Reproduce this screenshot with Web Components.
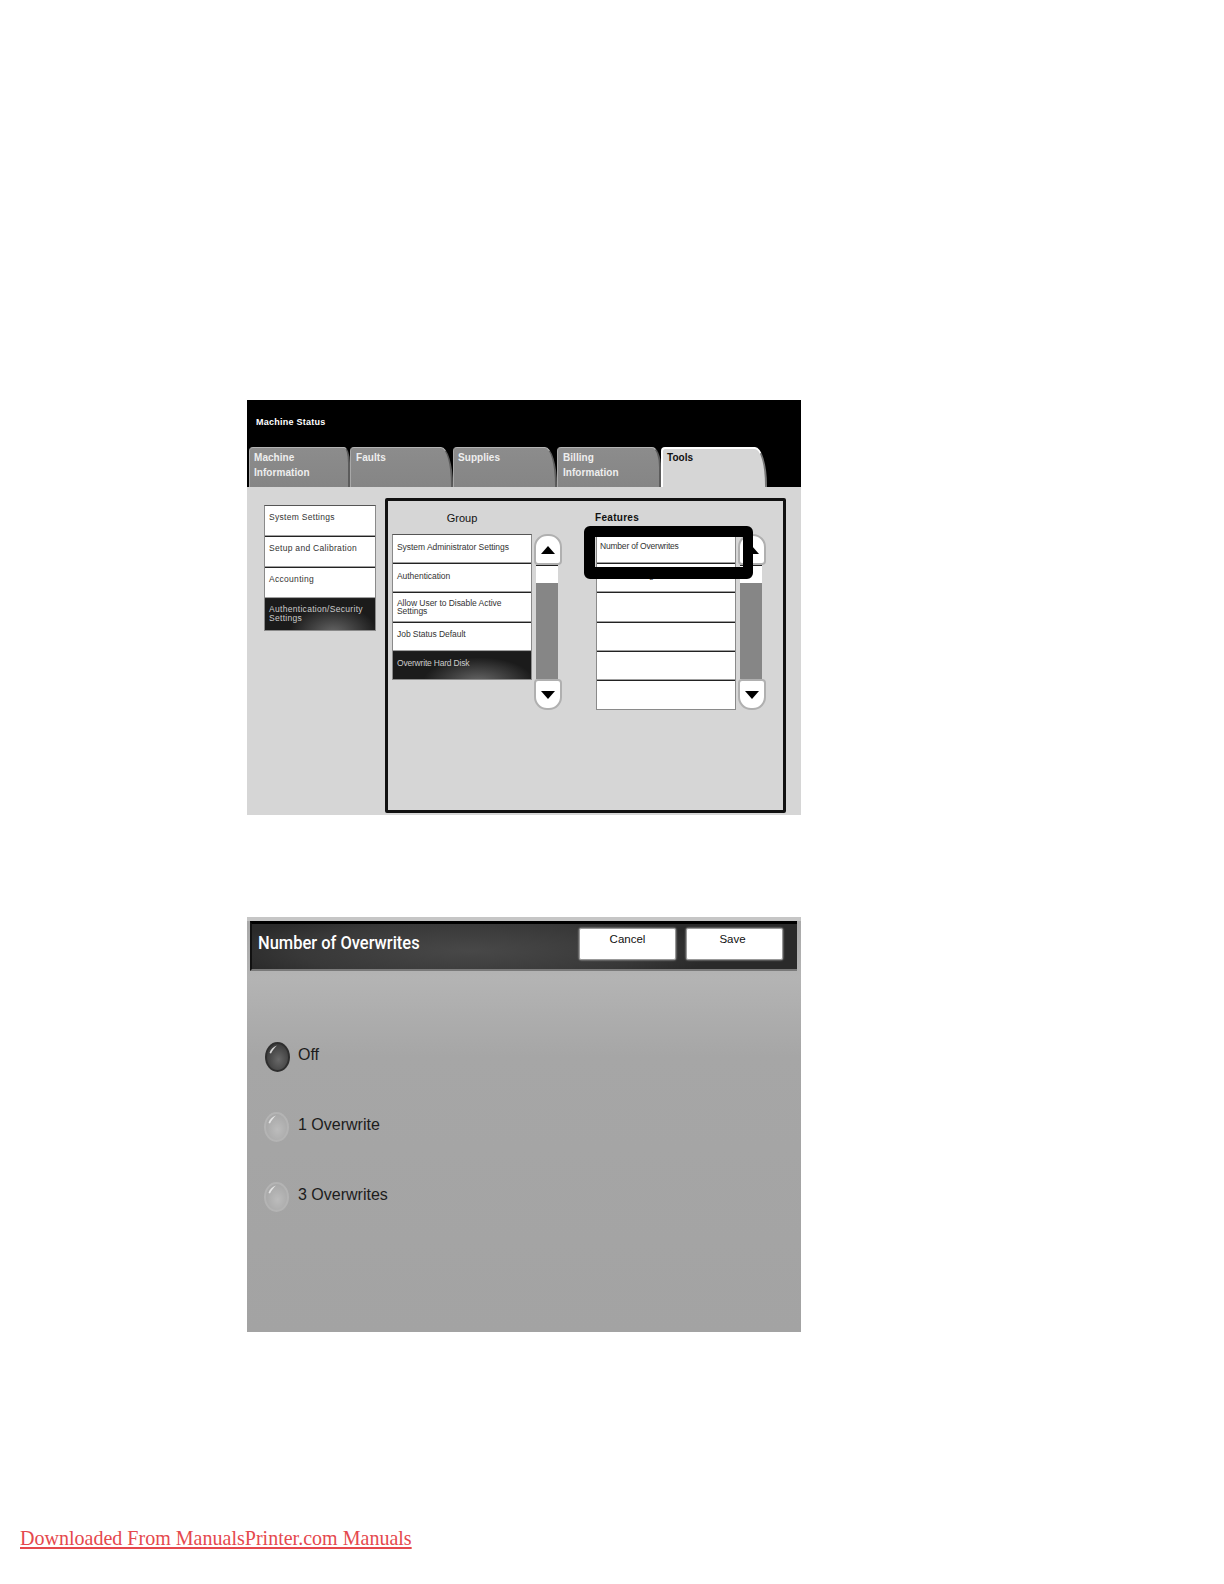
<!DOCTYPE html>
<html>
<head>
<meta charset="utf-8">
<title>Number of Overwrites</title>
<style>
  html, body { margin: 0; background: #fff; }
</style>
</head>
<body>
<x-manual-page>
  <x-status-panel>
    <x-tab slot="tabs" w="101" r="6 16" style="padding-left:4px">Machine<br>Information</x-tab>
    <x-tab slot="tabs" w="103">Faults</x-tab>
    <x-tab slot="tabs" w="104" style="padding-left:4px">Supplies</x-tab>
    <x-tab slot="tabs" w="104" r="9 20">Billing<br>Information</x-tab>
    <x-tab slot="tabs" w="106" active style="padding-left:4px">Tools</x-tab>

    <x-list slot="nav" rowh="31" pad="7" ls=".3">
      <x-row>System Settings</x-row>
      <x-row>Setup and Calibration</x-row>
      <x-row>Accounting</x-row>
      <x-row selected style="padding-top:6px">Authentication/Security<br>Settings</x-row>
    </x-list>

    <x-list slot="group" rowh="29.2" pad="7.5" ls="-.05">
      <x-row>System Administrator Settings</x-row>
      <x-row>Authentication</x-row>
      <x-row style="padding-top:5.5px">Allow User to Disable Active<br>Settings</x-row>
      <x-row>Job Status Default</x-row>
      <x-row selected style="height:27px;letter-spacing:-.2px">Overwrite Hard Disk</x-row>
    </x-list>

    <x-list slot="features" rowh="29.2" pad="7" ls="-.2">
      <x-row indent="3">Number of Overwrites</x-row>
      <x-row indent="52">g</x-row>
      <x-row></x-row>
      <x-row></x-row>
      <x-row></x-row>
      <x-row style="height:28.2px"></x-row>
    </x-list>
  </x-status-panel>

  <x-overwrites-panel>
    <x-radio checked>Off</x-radio>
    <x-radio>1 Overwrite</x-radio>
    <x-radio>3 Overwrites</x-radio>
  </x-overwrites-panel>

  <x-footer-link>Downloaded From ManualsPrinter.com Manuals</x-footer-link>
</x-manual-page>

<script>
const pageTemplate = document.createElement('template');
pageTemplate.innerHTML = `
<style>
  :host {
    display: flex;
    flex-direction: column;
    box-sizing: border-box;
    height: 1584px;
    padding: 400px 0 0 247px;
    font-family: "Liberation Sans", Arial, sans-serif;
  }
  .panels {
    display: flex;
    flex-direction: column;
    gap: 102px;
  }
  .foot {
    margin: 194px 0 0 -227px;
  }
</style>
<div class="panels"><slot></slot></div>
<div class="foot"><slot name="foot"></slot></div>
`;

class XManualPage extends HTMLElement {
    constructor() {
        super();
        this.attachShadow({mode: 'open'});
        this.shadowRoot.appendChild(pageTemplate.content.cloneNode(true));
    }
    connectedCallback() {
        const link = this.querySelector('x-footer-link');
        if (link) link.slot = 'foot';
    }
}

const statusTemplate = document.createElement('template');
statusTemplate.innerHTML = `
<style>
  :host {
    display: block;
    width: 554px;
    height: 415px;
    font-family: "Liberation Sans", Arial, sans-serif;
  }
  .head {
    display: flex;
    flex-direction: column;
    justify-content: space-between;
    box-sizing: border-box;
    height: 87px;
    background: #000;
    padding-top: 16px;
  }
  .machine-status {
    margin-left: 9px;
    color: #fff;
    font-size: 9px;
    line-height: 12px;
    font-weight: bold;
    letter-spacing: .25px;
  }
  .tabs {
    display: flex;
    margin-left: 2px;
  }
  .body {
    display: flex;
    align-items: flex-start;
    box-sizing: border-box;
    height: 328px;
    background: #d6d6d6;
    padding: 11px 0 0 17px;
  }
  .nav {
    width: 112px;
    margin: 7px 9px 0 0;
  }
  .frame {
    position: relative;
    display: grid;
    grid-template-columns: 140px 30px 34px 140px 30px;
    grid-template-rows: 33px 176px;
    box-sizing: border-box;
    width: 401px;
    height: 315px;
    border: 3px solid #111;
    border-radius: 2px;
    padding-left: 4px;
  }
  h3 {
    margin: 0;
    font-size: 11px;
    color: #111;
    line-height: 14px;
  }
  .group-title {
    grid-column: 1;
    text-align: center;
    font-weight: normal;
    padding-top: 10px;
  }
  .feat-title {
    grid-column: 4;
    margin-left: -1px;
    padding-top: 10px;
    font-size: 10px;
    letter-spacing: .3px;
  }
  x-scrollbar.left { grid-column: 2; grid-row: 2; margin-left: 2px; }
  x-scrollbar.right { grid-column: 5; grid-row: 2; margin-left: 2px; }
  .group-list { grid-column: 1; grid-row: 2; }
  .feat-list { grid-column: 4; grid-row: 2; }
  /* black callout drawn over the first feature row */
  .callout {
    position: absolute;
    left: 196px;
    top: 25px;
    width: 169px;
    height: 53px;
    box-sizing: border-box;
    border: 11px solid #000;
    border-right-width: 10px;
    border-bottom-width: 12px;
    border-radius: 6px;
  }
</style>
<div class="head">
  <div class="machine-status">Machine Status</div>
  <div class="tabs"><slot name="tabs"></slot></div>
</div>
<div class="body">
  <div class="nav"><slot name="nav"></slot></div>
  <div class="frame">
    <h3 class="group-title">Group</h3>
    <div></div><div></div>
    <h3 class="feat-title">Features</h3>
    <div></div>
    <div class="group-list"><slot name="group"></slot></div>
    <x-scrollbar class="left"></x-scrollbar>
    <div class="feat-list"><slot name="features"></slot></div>
    <x-scrollbar class="right"></x-scrollbar>
    <div class="callout"></div>
  </div>
</div>
`;

class XStatusPanel extends HTMLElement {
    constructor() {
        super();
        this.attachShadow({mode: 'open'});
        this.shadowRoot.appendChild(statusTemplate.content.cloneNode(true));
    }
}

const tabTemplate = document.createElement('template');
tabTemplate.innerHTML = `
<style>
  :host {
    display: block;
    box-sizing: border-box;
    height: 40px;
    padding: 3px 0 0 5px;
    background: linear-gradient(#8c8c8c, #858585);
    border-top: 1px solid #b4b4b4;
    border-left: 1px solid #a8a8a8;
    border-right: 2px solid #5c5c5c;
    border-radius: 4px var(--rx, 12px) 0 0 / 4px var(--ry, 38px) 0 0;
    color: #eee;
    font-size: 10px;
    font-weight: bold;
    line-height: 14.5px;
    letter-spacing: .05px;
  }
  :host([active]) {
    background: #d6d6d6;
    color: #111;
    border-top: 2px solid #fff;
    border-left: 2px solid #fff;
    border-right: 2px solid #777;
    padding-top: 2px;
  }
</style>
<slot></slot>
`;

class XTab extends HTMLElement {
    constructor() {
        super();
        this.attachShadow({mode: 'open'});
        this.shadowRoot.appendChild(tabTemplate.content.cloneNode(true));
    }
    connectedCallback() {
        this.style.width = this.getAttribute('w') + 'px';
        const r = this.getAttribute('r');
        if (r) {
            const [rx, ry] = r.split(' ');
            this.style.setProperty('--rx', rx + 'px');
            this.style.setProperty('--ry', ry + 'px');
        }
    }
}

const listTemplate = document.createElement('template');
listTemplate.innerHTML = `
<style>
  :host {
    display: flex;
    flex-direction: column;
    box-sizing: border-box;
    border: 1px solid #8a8a8a;
    border-top-color: #555;
    background: #fff;
  }
</style>
<slot></slot>
`;

class XList extends HTMLElement {
    constructor() {
        super();
        this.attachShadow({mode: 'open'});
        this.shadowRoot.appendChild(listTemplate.content.cloneNode(true));
    }
    connectedCallback() {
        this.style.setProperty('--row-h', this.getAttribute('rowh') + 'px');
        this.style.setProperty('--row-pad', this.getAttribute('pad') + 'px');
        this.style.setProperty('--row-ls', this.getAttribute('ls') + 'px');
    }
}

const rowTemplate = document.createElement('template');
rowTemplate.innerHTML = `
<style>
  :host {
    display: block;
    box-sizing: border-box;
    height: var(--row-h, 29px);
    padding: var(--row-pad, 6px) 0 0 4px;
    background: #fff;
    border-bottom: 1px solid #222;
    box-shadow: inset 0 -1px #a0a0a0;
    color: #333;
    font-size: 8.5px;
    line-height: 8.5px;
    letter-spacing: var(--row-ls, 0);
    white-space: nowrap;
    overflow: hidden;
  }
  :host(:last-child) {
    border-bottom: 0;
    box-shadow: none;
  }
  :host([selected]) {
    background: radial-gradient(ellipse 40% 90% at 62% 110%, #666, #1b1b1b);
    color: #ccc;
  }
</style>
<slot></slot>
`;

class XRow extends HTMLElement {
    constructor() {
        super();
        this.attachShadow({mode: 'open'});
        this.shadowRoot.appendChild(rowTemplate.content.cloneNode(true));
    }
    connectedCallback() {
        const indent = this.getAttribute('indent');
        if (indent) this.style.paddingLeft = indent + 'px';
    }
}

const scrollTemplate = document.createElement('template');
scrollTemplate.innerHTML = `
<style>
  :host {
    display: flex;
    flex-direction: column;
    align-items: flex-start;
    width: 28px;
    height: 176px;
  }
  .btn {
    display: flex;
    align-items: center;
    justify-content: center;
    box-sizing: border-box;
    flex: none;
    width: 28px;
    height: 31px;
    background: #fff;
    border: 2px solid #b0b0b0;
  }
  .up { border-radius: 13px 13px 4px 4px; }
  .down { border-radius: 4px 4px 13px 13px; }
  .track {
    flex: 1;
    display: flex;
    flex-direction: column;
    box-sizing: border-box;
    width: 22px;
    margin-left: 2px;
    border-top: 1px solid #222;
    background: #868686;
  }
  .thumb {
    height: 17px;
    background: #fff;
  }
</style>
<div class="btn up"><svg width="14" height="8" viewBox="0 0 14 8"><path d="M7 0 14 8H0Z" fill="#000"/></svg></div>
<div class="track"><div class="thumb"></div></div>
<div class="btn down"><svg width="14" height="8" viewBox="0 0 14 8"><path d="M0 0H14L7 8Z" fill="#000"/></svg></div>
`;

class XScrollbar extends HTMLElement {
    constructor() {
        super();
        this.attachShadow({mode: 'open'});
        this.shadowRoot.appendChild(scrollTemplate.content.cloneNode(true));
    }
}

const overwritesTemplate = document.createElement('template');
overwritesTemplate.innerHTML = `
<style>
  :host {
    display: block;
    box-sizing: border-box;
    width: 554px;
    height: 415px;
    padding-top: 4px;
    background: linear-gradient(#c6c6c6 0 4px, #a9a9a9 4px, #b4b4b4 60px, #a6a6a6 140px, #a3a3a3);
    font-family: "Liberation Sans", Arial, sans-serif;
  }
  .bar {
    display: flex;
    align-items: center;
    justify-content: space-between;
    box-sizing: border-box;
    height: 50px;
    margin: 0 4px 0 3px;
    padding: 3px 14px 6px 6px;
    background: radial-gradient(ellipse 45% 90% at 40% 60%, #484848, #383838 70%, #2a2a2a);
    border-top: 3px solid #000;
    border-left: 2px solid #111;
    border-bottom: 2px solid #7a7a7a;
  }
  .title {
    color: #fff;
    font-family: Roboto, "Liberation Sans", sans-serif;
    font-size: 18.5px;
    font-weight: 500;
    margin-top: -4px;
    transform: scaleX(.89);
    transform-origin: left center;
  }
  .actions {
    display: flex;
    gap: 10px;
    margin-top: -2px;
  }
  .btn {
    box-sizing: border-box;
    width: 97px;
    height: 32px;
    background: #fff;
    border: 1px solid #999;
    border-radius: 2px;
    box-shadow: 0 0 2px #ccc;
    padding-top: 3px;
    text-align: center;
    color: #111;
    font-size: 11.5px;
    line-height: 14px;
  }
  .save {
    padding-right: 4px;
  }
  .options {
    display: flex;
    flex-direction: column;
    gap: 40px;
    padding: 71px 0 0 17px;
  }
</style>
<div class="bar">
  <div class="title">Number of Overwrites</div>
  <div class="actions">
    <div class="btn">Cancel</div>
    <div class="btn save">Save</div>
  </div>
</div>
<div class="options"><slot></slot></div>
`;

class XOverwritesPanel extends HTMLElement {
    constructor() {
        super();
        this.attachShadow({mode: 'open'});
        this.shadowRoot.appendChild(overwritesTemplate.content.cloneNode(true));
    }
}

const radioTemplate = document.createElement('template');
radioTemplate.innerHTML = `
<style>
  :host {
    display: flex;
    align-items: center;
    gap: 9px;
    height: 30px;
    color: #1c1c1c;
    font-size: 16px;
  }
  svg { flex: none; }
  .text { margin-top: -5px; }
  .rim { fill: #b4b4b4; }
  .fill { fill: url(#light); }
  :host([checked]) svg { margin-left: 1px; }
  :host([checked]) { gap: 8px; }
  :host([checked]) .rim { fill: #2e2e2e; }
  :host([checked]) .fill { fill: url(#dark); }
</style>
<svg width="25" height="30" viewBox="0 0 25 30">
  <defs>
    <radialGradient id="light" cx=".55" cy=".6" r=".6">
      <stop offset="0" stop-color="#bcbcbc"/>
      <stop offset="1" stop-color="#a8a8a8"/>
    </radialGradient>
    <radialGradient id="dark" cx=".55" cy=".6" r=".6">
      <stop offset="0" stop-color="#686868"/>
      <stop offset="1" stop-color="#3c3c3c"/>
    </radialGradient>
  </defs>
  <ellipse class="rim" cx="12.5" cy="15" rx="12.5" ry="15"/>
  <ellipse class="fill" cx="12.5" cy="15" rx="10.5" ry="13"/>
  <path d="M4.5 11C5.5 7.5 8 5 12 3.5 9.5 6 7.5 8 6 11.5Z" fill="#eee" fill-opacity=".85"/>
</svg>
<span class="text"><slot></slot></span>
`;

class XRadio extends HTMLElement {
    constructor() {
        super();
        this.attachShadow({mode: 'open'});
        this.shadowRoot.appendChild(radioTemplate.content.cloneNode(true));
    }
}

const linkTemplate = document.createElement('template');
linkTemplate.innerHTML = `
<style>
  :host {
    display: block;
    color: #e5484d;
    font-family: "Liberation Serif", "Times New Roman", serif;
    font-size: 20.05px;
    line-height: 24px;
    text-decoration: underline;
  }
</style>
<slot></slot>
`;

class XFooterLink extends HTMLElement {
    constructor() {
        super();
        this.attachShadow({mode: 'open'});
        this.shadowRoot.appendChild(linkTemplate.content.cloneNode(true));
    }
}

window.customElements.define('x-row', XRow);
window.customElements.define('x-list', XList);
window.customElements.define('x-tab', XTab);
window.customElements.define('x-scrollbar', XScrollbar);
window.customElements.define('x-status-panel', XStatusPanel);
window.customElements.define('x-radio', XRadio);
window.customElements.define('x-overwrites-panel', XOverwritesPanel);
window.customElements.define('x-footer-link', XFooterLink);
window.customElements.define('x-manual-page', XManualPage);
</script>
</body>
</html>
